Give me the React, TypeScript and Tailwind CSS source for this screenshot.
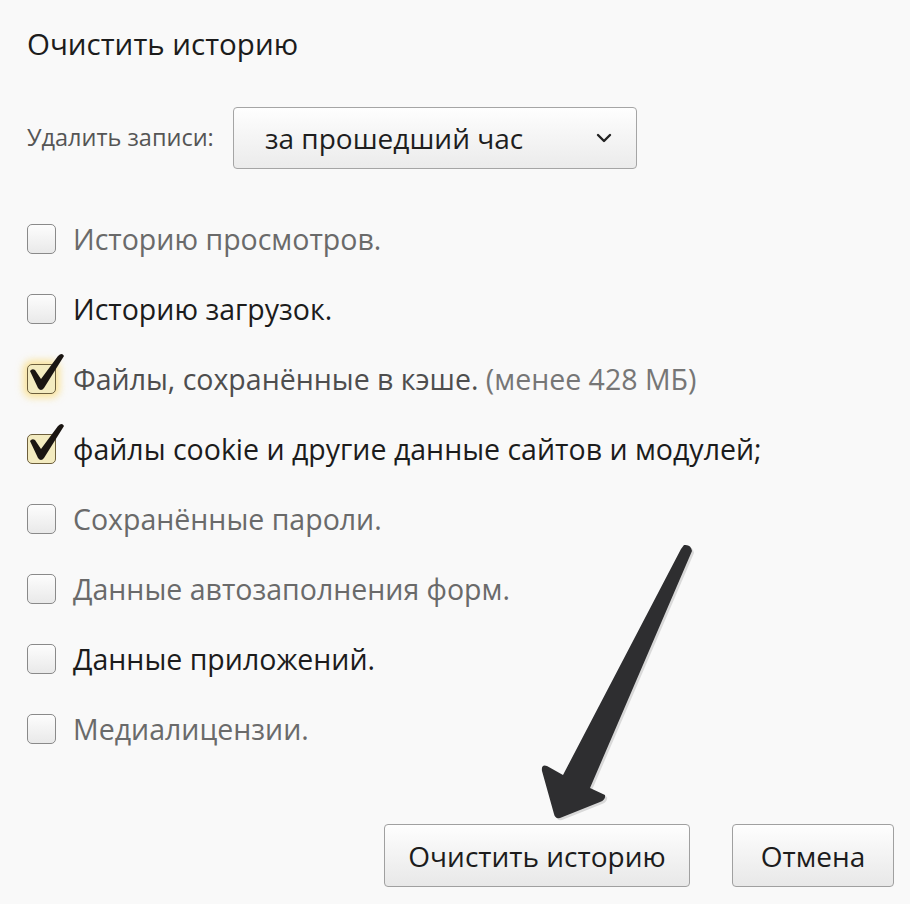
import React from 'react'

type Item = {
  label: string
  extra?: string
  checked?: boolean
  glow?: boolean
  tone: 'dim' | 'dark' | 'mid'
}

const items: Item[] = [
  { label: 'Историю просмотров.', tone: 'dim' },
  { label: 'Историю загрузок.', tone: 'dark' },
  { label: 'Файлы, сохранённые в кэше.', extra: '(менее 428 МБ)', checked: true, glow: true, tone: 'mid' },
  { label: 'файлы cookie и другие данные сайтов и модулей;', checked: true, tone: 'dark' },
  { label: 'Сохранённые пароли.', tone: 'dim' },
  { label: 'Данные автозаполнения форм.', tone: 'dim' },
  { label: 'Данные приложений.', tone: 'dark' },
  { label: 'Медиалицензии.', tone: 'dim' },
]

function Checkbox({ checked, glow }: { checked?: boolean; glow?: boolean }) {
  return (
    <div className="relative w-[29px] h-[30px] shrink-0">
      <div
        className={
          checked
            ? glow
              ? 'w-full h-full rounded-[5px] border border-[#6d5f3c] bg-[#f3ebc0] shadow-[0_0_7px_4px_rgba(250,212,90,0.55)]'
              : 'w-full h-full rounded-[5px] border border-[#6d5f3c] bg-[#f3ebc0]'
            : 'w-full h-full rounded-[5px] border border-[#8a8a8a] bg-gradient-to-b from-[#fdfdfd] to-[#e9e9e9]'
        }
      />
      {checked && (
        <svg className="absolute left-0 top-0 overflow-visible" width="40" height="30" viewBox="0 0 40 30">
          {/* heavy tick, short leg thick, long leg tapering up */}
          <path
            d="M3 7 Q5 4 8 6 L14 15 L31 -8 Q35 -12 37 -8 L17 24 Q14 28 11 24 Z"
            fill="#1a1512"
          />
        </svg>
      )}
    </div>
  )
}

export default function App() {
  return (
    <div className="relative w-[910px] h-[904px] overflow-hidden bg-[#f9f9f9] font-['Open_Sans','Noto_Sans',sans-serif]">
      <div className="pl-[27px] pr-[16px] pt-[25px]">
        {/* Title */}
        <h1 className="text-[29.5px] leading-[38px] text-[#1c1c1c]">Очистить историю</h1>

        {/* Period select */}
        <div className="flex items-center mt-[44px]">
          <span className="text-[23.5px] text-[#555] w-[206px]">Удалить записи:</span>
          <div className="flex items-center justify-between w-[404px] h-[62px] rounded-[4px] border border-[#a5a5a5] bg-gradient-to-b from-[#fefefe] to-[#ebebeb] pl-[31px] pr-[24px]">
            <span className="text-[28px] text-[#1e1e1e]">за прошедший час</span>
            <svg width="16" height="10" viewBox="0 0 16 10">
              <path d="M2 2 L8 8 L14 2" fill="none" stroke="#222" strokeWidth="2.4" strokeLinecap="round" strokeLinejoin="round" />
            </svg>
          </div>
        </div>

        {/* Options */}
        <div className="flex flex-col mt-[35px]">
          {items.map((it, i) => (
            <div key={i} className="flex items-center h-[70px] gap-[17px]">
              <Checkbox checked={it.checked} glow={it.glow} />
              <span
                className={
                  it.tone === 'dark'
                    ? 'text-[28.5px] text-[#1c1c1c] whitespace-nowrap'
                    : it.tone === 'mid'
                      ? 'text-[28.5px] text-[#4e4e4e] whitespace-nowrap'
                      : 'text-[28.5px] text-[#6a6a6a] whitespace-nowrap'
                }
              >
                {it.label}
                {it.extra && <span className="text-[#767676]"> {it.extra}</span>}
              </span>
            </div>
          ))}
        </div>

        {/* Buttons */}
        <div className="flex justify-end gap-[42px] mt-[60px]">
          <button className="w-[306px] h-[63px] rounded-[4px] border border-[#a0a0a0] bg-gradient-to-b from-[#fefefe] to-[#e8e8e8] text-[28px] text-[#1c1c1c]">
            Очистить историю
          </button>
          <button className="w-[162px] h-[63px] rounded-[4px] border border-[#a0a0a0] bg-gradient-to-b from-[#fefefe] to-[#e8e8e8] text-[28px] text-[#1c1c1c]">
            Отмена
          </button>
        </div>
      </div>

      {/* Pointer arrow overlay */}
      <svg className="absolute left-0 top-0 pointer-events-none" width="910" height="904" viewBox="0 0 910 904">
        <path
          d="M684 545 Q691 544 692 551 L590 788 L605 795 Q606 800 600 802 L560 818 Q555 819 554 814 L542 771 Q541 764 547 766 L563 775 L681 549 Z"
          fill="#d9d9d9"
          transform="translate(2 2)"
        />
        <path
          d="M684 545 Q691 544 692 551 L590 788 L605 795 Q606 800 600 802 L560 818 Q555 819 554 814 L542 771 Q541 764 547 766 L563 775 L681 549 Z"
          fill="#2e2e30"
        />
      </svg>
    </div>
  )
}
